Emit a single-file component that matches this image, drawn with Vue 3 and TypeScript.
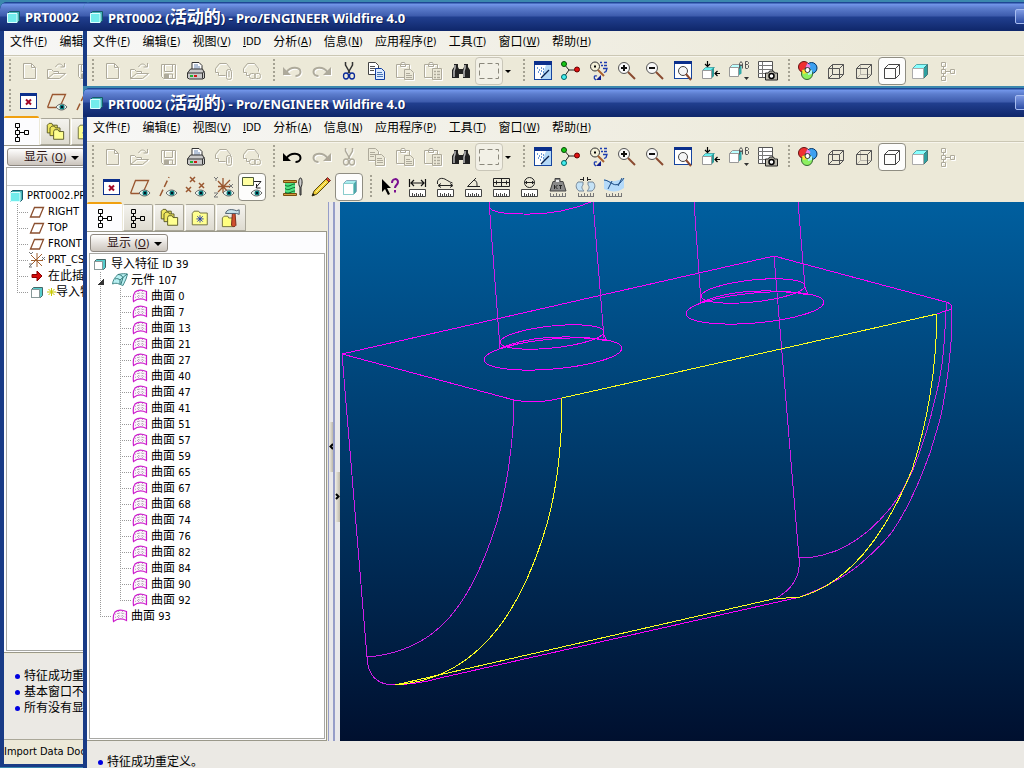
<script setup lang="ts">
import { h } from 'vue'

interface MenuItem { label: string; key: string }
interface Tool { icon: string; tip: string; off?: boolean; on?: boolean; soft?: boolean; drop?: boolean }
interface TreeRow { text: string; level: number; icon: string; last?: boolean; open?: boolean; star?: boolean }

/* Splits a label into Chinese and Latin runs so each gets its own type size. */
const Label = (props: { text: string }) =>
  h('span', { class: 'label' }, props.text.split(/([\u3000-\u9fff]+)/).filter(Boolean).map(run =>
    h('span', { class: /[\u3000-\u9fff]/.test(run) ? 'cn' : 'en' }, run)))
Label.props = ['text']

const fullTitle = ['PRT0002 (', '活动的', ') - Pro/ENGINEER Wildfire 4.0']

const menu: MenuItem[] = [
  { label: '文件', key: 'F' }, { label: '编辑', key: 'E' }, { label: '视图', key: 'V' },
  { label: '', key: 'IDD' }, { label: '分析', key: 'A' }, { label: '信息', key: 'N' },
  { label: '应用程序', key: 'P' }, { label: '工具', key: 'T' }, { label: '窗口', key: 'W' },
  { label: '帮助', key: 'H' },
]

const mainBar = (canUndo: boolean): Tool[][] => [
  [
    { icon: 'new', tip: '新建', off: true }, { icon: 'open', tip: '打开', off: true },
    { icon: 'save', tip: '保存', off: true }, { icon: 'print', tip: '打印' },
    { icon: 'mail', tip: '发送', off: true }, { icon: 'link', tip: '发送链接', off: true },
  ],
  [
    { icon: 'undo', tip: '撤消', off: !canUndo }, { icon: 'redo', tip: '重做', off: true },
    { icon: 'cut', tip: '剪切', off: canUndo }, { icon: 'copy', tip: '复制', off: canUndo },
    { icon: 'paste', tip: '粘贴', off: true }, { icon: 'pastex', tip: '选择性粘贴', off: true },
    { icon: 'find', tip: '查找' }, { icon: 'select', tip: '选取', soft: true, drop: true },
  ],
  [
    { icon: 'repaint', tip: '重画' }, { icon: 'spin', tip: '旋转中心' }, { icon: 'orient', tip: '定向模式' },
    { icon: 'zoomin', tip: '放大' }, { icon: 'zoomout', tip: '缩小' }, { icon: 'refit', tip: '重新调整' },
    { icon: 'reorient', tip: '重定向' }, { icon: 'views', tip: '已保存视图' }, { icon: 'layers', tip: '视图管理器' },
  ],
  [
    { icon: 'color', tip: '外观' }, { icon: 'wire', tip: '线框' }, { icon: 'hidden', tip: '隐藏线' },
    { icon: 'nohidden', tip: '消隐', on: true }, { icon: 'shade', tip: '着色' }, { icon: 'tree', tip: '模型树', off: true },
  ],
]

const featureBar: Tool[][] = [
  [
    { icon: 'close', tip: '关闭' }, { icon: 'plane', tip: '基准平面' }, { icon: 'axis', tip: '基准轴' },
    { icon: 'points', tip: '基准点' }, { icon: 'csys', tip: '坐标系' }, { icon: 'note', tip: '注释', on: true },
  ],
  [{ icon: 'spool', tip: '缝合' }, { icon: 'pencil', tip: '编辑' }, { icon: 'cube', tip: '实体', on: true }],
  [
    { icon: 'help', tip: '上下文帮助' }, { icon: 'distance', tip: '距离' }, { icon: 'length', tip: '长度' },
    { icon: 'angle', tip: '角度' }, { icon: 'area', tip: '面积' }, { icon: 'diameter', tip: '直径' },
    { icon: 'mass', tip: '质量' }, { icon: 'clearance', tip: '间隙' }, { icon: 'curve', tip: '曲率' },
  ],
]

const backBars: Tool[][][] = [[mainBar(false)[0].slice(0, 3)], [featureBar[0].slice(0, 3)]]

const windows = [
  { id: 'back', title: ['PRT0002', '', ''], menu: [menu[0], { label: '编辑', key: '' }], bars: backBars },
  { id: 'middle', title: fullTitle, menu, bars: [mainBar(false)] },
  { id: 'front', title: fullTitle, menu, bars: [mainBar(true), featureBar] },
]

const backTabs = ['tree', 'folders', 'favorite']
const frontTabs = ['tree', 'tree', 'folders', 'favorite', 'hammer']

const backTree: TreeRow[] = [
  { text: 'PRT0002.PR', level: 0, icon: 'part' },
  { text: 'RIGHT', level: 1, icon: 'datum' }, { text: 'TOP', level: 1, icon: 'datum' },
  { text: 'FRONT', level: 1, icon: 'datum' }, { text: 'PRT_CS', level: 1, icon: 'csysmini' },
  { text: '在此插', level: 1, icon: 'insert' },
  { text: '导入特', level: 1, icon: 'import', last: true, star: true },
]

const surfaces = [0, 7, 13, 21, 27, 40, 47, 41, 51, 57, 59, 65, 67, 68, 74, 76, 82, 84, 90, 92]
const frontTree: TreeRow[] = [
  { text: '导入特征 ID 39', level: 0, icon: 'import' },
  { text: '元件 107', level: 1, icon: 'quilt', open: true },
  ...surfaces.map((n, i) => ({ text: `曲面 ${n}`, level: 2, icon: 'surface', last: i === surfaces.length - 1 })),
  { text: '曲面 93', level: 1, icon: 'surface', last: true },
]

const messages: Record<string, string[]> = {
  back: ['特征成功重', '基本窗口不', '所有没有显'],
  front: ['特征成功重定义。'],
}
</script>

<template>
  <div class="desktop">
    <svg class="defs" width="0" height="0" aria-hidden="true">
      <symbol id="i-new" viewBox="0 0 22 22"><path d="M5.5 3.5h8l4 4v11h-12zM13.5 3.5v4h4" fill="none" stroke="currentColor" /></symbol>
      <symbol id="i-open" viewBox="0 0 22 22"><path d="M1.5 18.5v-9h4l2 2h5v2M1.5 18.5l6-5h12l-6 5zM9.5 7c2-4 6-4 8 0M18.5 3v4h-4" fill="none" stroke="currentColor" /></symbol>
      <symbol id="i-save" viewBox="0 0 22 22"><path d="M4.5 4.5h14v14h-12l-2-2zM7.5 4.5v7h8v-7M7.5 18v-4h8v4" fill="none" stroke="currentColor" /><path d="M8 14h4v4h-4z" fill="currentColor" /></symbol>
      <symbol id="i-print" viewBox="0 0 22 22"><path d="M7 10V2.5h7l3 3V10" fill="#fff" stroke="#333" /><path d="M9 5h4M9 7h6M9 9h6" stroke="#6a86b0" /><path d="M2.5 13l3-4h12l2 4v5l-2 1h-13l-2-1z" fill="#c9c9c9" stroke="#333" /><path d="M2.5 13h15v5.5M17.5 13l2-2" fill="none" stroke="#333" /><path d="M5 15h3v2H5z" fill="#20b030" /><path d="M9 15h3v2H9z" fill="#d01818" /></symbol>
      <symbol id="i-mail" viewBox="0 0 22 22"><path d="M5.5 15.5v-3h-3v-4l4-5h7l4 5v2M5.5 15.5h7" fill="none" stroke="currentColor" /><rect x="13.5" y="9.5" width="5" height="10" rx="2" fill="none" stroke="currentColor" /><path d="M16 11v6" stroke="currentColor" /></symbol>
      <symbol id="i-link" viewBox="0 0 22 22"><path d="M5.5 15.5v-3h-3v-4l4-5h7l4 5v3M5.5 15.5h3" fill="none" stroke="currentColor" /><rect x="8.5" y="13.5" width="6" height="5" rx="2" fill="none" stroke="currentColor" /><rect x="13.5" y="13.5" width="6" height="5" rx="2" fill="none" stroke="currentColor" /></symbol>
      <symbol id="i-undo" viewBox="0 0 22 22"><path d="M4.5 12c4-6 14-5.5 14 0 0 3-3 4-5 4" fill="none" stroke="currentColor" stroke-width="2" /><path d="M1 7v8h8z" fill="currentColor" /></symbol>
      <symbol id="i-redo" viewBox="0 0 22 22"><path d="M17.5 12c-4-6-14-5.5-14 0 0 3 3 4 5 4" fill="none" stroke="currentColor" stroke-width="2" /><path d="M21 7v8h-8z" fill="currentColor" /></symbol>
      <symbol id="i-cut" viewBox="0 0 22 22"><path d="M7.5 2v3l4.5 8M14.5 2v3l-4.5 8" fill="none" stroke="var(--tone, #333)" stroke-width="1.5" /><ellipse cx="8" cy="16" rx="2.5" ry="3" fill="none" stroke="var(--tone, #0a2a9a)" stroke-width="1.3" /><ellipse cx="14" cy="16" rx="2.5" ry="3" fill="none" stroke="var(--tone, #0a2a9a)" stroke-width="1.3" /></symbol>
      <symbol id="i-copy" viewBox="0 0 22 22"><path d="M2.5 2.5h7l3 3v9h-10z" fill="var(--paper, #fff)" stroke="var(--tone, #444)" /><path d="M4 6.5h5M4 8.5h6M4 10.5h4" stroke="var(--tone, #555)" /><path d="M9.5 8.5h6l3 3v8h-9z" fill="var(--paper, #dcebff)" stroke="var(--tone, #123ea0)" /><path d="M11 12.5h5M11 14.5h6M11 16.5h6" stroke="var(--tone, #4a76b8)" /></symbol>
      <symbol id="i-paste" viewBox="0 0 22 22"><path d="M2.5 4.5h13v13h-13zM6.5 4.5l1-2h3l1 2v2h-5z" fill="none" stroke="currentColor" /><path d="M10.5 9.5h6l3 3v7h-9z" fill="#ece9d8" stroke="currentColor" /><path d="M12 13.5h4M12 15.5h6M12 17.5h6" stroke="currentColor" /></symbol>
      <symbol id="i-pastex" viewBox="0 0 22 22"><path d="M2.5 4.5h13v13h-13zM6.5 4.5l1-2h3l1 2v2h-5z" fill="none" stroke="currentColor" /><path d="M10.5 8.5h9v11h-9z" fill="#ece9d8" stroke="currentColor" /><path d="M12 11.5h2M12 14.5h2M12 17.5h2M15 11.5h3M15 14.5h3M15 17.5h3" stroke="currentColor" stroke-width="1.5" /></symbol>
      <symbol id="i-find" viewBox="0 0 22 22"><path d="M4 4h4v3l1 2v9H2v-8l2-3zM14 4h4v3l2 3v8h-7V9l1-2zM9 9h4v5H9z" fill="#222" /><path d="M5 5v3l-1 3v6M15 5v3l-1 3v6" fill="none" stroke="#b8b8b8" stroke-width="1.5" /></symbol>
      <symbol id="i-select" viewBox="0 0 22 22"><rect x="1.5" y="3.5" width="19" height="15" fill="none" stroke="#8b887c" stroke-dasharray="5 3" /></symbol>
      <symbol id="i-repaint" viewBox="0 0 22 22"><rect x="2.5" y="2.5" width="17" height="17" fill="#fff" stroke="#1645a0" /><path d="M14 5h5v14H9z" fill="#b4d8f6" /><path d="M2 1h18v4H2z" fill="#0b2f8c" /><path d="M5 8h1M7 10h1M9 8h1M6 12h1M9 11h1M11 9h1M8 14h1M11 12h1M12 14h1" stroke="#3c78c8" stroke-width="1.5" /><path d="M9 18l8-8" stroke="#071e4a" stroke-width="1.3" /></symbol>
      <symbol id="i-spin" viewBox="0 0 22 22"><path d="M4 4l5 6h9M9 10l-5 7" fill="none" stroke="#222" /><circle cx="4" cy="4" r="2.5" fill="#17c817" stroke="#064806" /><circle cx="4" cy="17" r="2.5" fill="#4ee" stroke="#066" /><circle cx="17" cy="9.5" r="2.5" fill="#e01010" stroke="#600" /></symbol>
      <symbol id="i-orient" viewBox="0 0 22 22"><circle cx="7" cy="6.5" r="4.5" fill="#f3f0d8" stroke="#333" /><path d="M6 6.5h2" stroke="#000" stroke-width="2" /><path d="M10 10l6 6" stroke="#a86030" stroke-width="2" /><path d="M12 2.5h2M16 2.5h3M13 5.5h2M16 5.5h3M15 8.5h4l-1 3-2 1M9 16c-3-1-4 2-1 4" fill="none" stroke="#1c3cae" stroke-width="1.3" /><path d="M8 20h5v-5z" fill="#101c8c" /></symbol>
      <symbol id="i-zoomin" viewBox="0 0 22 22"><circle cx="8" cy="8" r="5.5" fill="#f8f8f8" stroke="#555" /><path d="M5 8h6M8 5v6" stroke="#111" stroke-width="2" /><path d="M12 12l7 7" stroke="#8a4a30" stroke-width="2" /></symbol>
      <symbol id="i-zoomout" viewBox="0 0 22 22"><circle cx="8" cy="8" r="5.5" fill="#f8f8f8" stroke="#555" /><path d="M5 8h6" stroke="#111" stroke-width="2" /><path d="M12 12l7 7" stroke="#8a4a30" stroke-width="2" /></symbol>
      <symbol id="i-refit" viewBox="0 0 22 22"><rect x="2.5" y="2.5" width="17" height="16" fill="#fff" stroke="#1645a0" /><path d="M2 1h18v3H2z" fill="#0b2f8c" /><circle cx="11" cy="11" r="4.5" fill="#f5f5f5" stroke="#444" /><path d="M14 14l5 6" stroke="#8a4a30" stroke-width="2" /></symbol>
      <symbol id="i-reorient" viewBox="0 0 22 22"><path d="M2.5 10.5l3-3h9l-3 3z" fill="#6ee" stroke="#5aa" /><path d="M11 10l3-3v9l-3 3z" fill="#2a9a98" /><path d="M2.5 10.5h9v8h-9z" fill="#fff" stroke="#999" /><path d="M7.5 1v5M5 4l2.5 2.5L10 4M20 13.5h-5M17.5 11l-2.5 2.5 2.5 2.5" fill="none" stroke="#000" stroke-width="1.2" /></symbol>
      <symbol id="i-views" viewBox="0 0 22 22"><path d="M1.5 7.5l3-3h9l-3 3z" fill="#bff" stroke="#999" /><path d="M10.5 7.5l3-3v9l-3 2z" fill="#3aa" /><path d="M1.5 7.5h9v9h-9z" fill="#fff" stroke="#999" /><path d="M11.5 8.5V3.5l1.5-2 1.5 2v5M12 5.5h2M17.5 8V1.5h2l1 1v1l-1 1h-2M19.5 4.5l1 1v2l-1 1h-2" fill="none" stroke="#555" /><path d="M16 17h5l-2.500 3z" fill="#333" /></symbol>
      <symbol id="i-layers" viewBox="0 0 22 22"><path d="M2.5 1.5h14v16h-14z" fill="#fff" stroke="#555" /><path d="M2 5.5h14M2 9.5h14M2 13.5h14M6.5 2v15" stroke="#777" /><path d="M9.5 13h3l1-2h4l1 2h3v7h-12z" fill="#bbb8ac" stroke="#222" /><circle cx="15.5" cy="16" r="2.5" fill="#fff" stroke="#000" stroke-width="1.5" /></symbol>
      <symbol id="i-color" viewBox="0 0 22 22"><circle cx="7" cy="7" r="5.5" fill="#f03030" stroke="#611" /><circle cx="14.5" cy="8" r="5.5" fill="#3ca0f0" stroke="#036" /><circle cx="10" cy="14" r="5.5" fill="#8df060" stroke="#363" /><path d="M10.5 3l3 3-2 4-3-3z" fill="#f080e0" /><path d="M5 10l5-1v4l-4 1z" fill="#ffe030" /><path d="M15 10v4l-4 1v-4z" fill="#aef4f8" /><circle cx="10.5" cy="10" r="2.5" fill="#fff" stroke="#333" /></symbol>
      <symbol id="i-wire" viewBox="0 0 22 22"><path d="M3.5 8.5h11v10h-11zM7.5 4.5h11v10h-11zM3.5 8.5l4-4M14.5 8.5l4-4M14.5 18.5l4-4M3.5 18.5l4-4" fill="none" stroke="#555" /></symbol>
      <symbol id="i-hidden" viewBox="0 0 22 22"><path d="M7.5 4.5v10h11M3.5 18.5l4-4" fill="none" stroke="#b5b2a8" /><path d="M3.5 8.5h11v10h-11zM3.5 8.5l4-4h11v10l-4 4M14.5 8.5l4-4" fill="none" stroke="#555" /></symbol>
      <symbol id="i-nohidden" viewBox="0 0 22 22"><path d="M3.5 8.5h11v10h-11zM3.5 8.5l4-4h11v10l-4 4M14.5 8.5l4-4" fill="none" stroke="#444" /></symbol>
      <symbol id="i-shade" viewBox="0 0 22 22"><path d="M3.5 8.5l4-4h11l-4 4z" fill="#8ff" stroke="#5aa" /><path d="M14.5 8.5l4-4v10l-4 4z" fill="#2f9f9f" stroke="#477" /><path d="M3.5 8.5h11v10h-11z" fill="#fff" stroke="#aaa" /></symbol>
      <symbol id="i-tree" viewBox="0 0 22 22"><path d="M4.5 2.5h4v4h-4zM4.5 9.5h4v4h-4zM4.5 16.5h4v4h-4zM13.5 9.5h4v4h-4zM6.5 6.5v3M6.5 13.5v3M8.5 11.5h5" fill="none" stroke="currentColor" /></symbol>
      <symbol id="i-close" viewBox="0 0 22 22"><rect x="2.5" y="4.5" width="16" height="14" fill="#fff" stroke="#0b2f8c" /><path d="M2 3h17v3H2z" fill="#0b2f8c" /><path d="M8 9.500l5 5M13 9.500l-5 5" stroke="#a00828" stroke-width="2" /></symbol>
      <symbol id="i-eye" viewBox="0 0 12 8"><path d="M0 4c3-4 8-4 11 0-3 4-8 4-11 0z" fill="#e8f4f0" stroke="#666" /><circle cx="6" cy="4" r="2.5" fill="#087878" /><path d="M5 4h2" stroke="#012" stroke-width="2" /></symbol>
      <symbol id="i-plane" viewBox="0 0 22 22"><path d="M1.5 17.5l5-13h13l-5 11M1.5 17.5h9" fill="none" stroke="#9a5730" stroke-width="1.3" /><use href="#i-eye" x="10" y="13" width="12" height="8" /></symbol>
      <symbol id="i-axis" viewBox="0 0 22 22"><path d="M3 20L12 1" stroke="#9a5730" stroke-width="1.5" stroke-dasharray="7 3" /><use href="#i-eye" x="9" y="13" width="12" height="8" /></symbol>
      <symbol id="i-points" viewBox="0 0 22 22"><path d="M5 1l5 5M10 1L5 6M14 7l5 5M19 7l-5 5M1 11l5 5M6 11l-5 5" stroke="#9a5730" stroke-width="1.5" /><use href="#i-eye" x="10" y="13" width="12" height="8" /></symbol>
      <symbol id="i-csys" viewBox="0 0 22 22"><path d="M10 2v15M5 5l11 12M17 4L5 16M5 10.5h12" stroke="#9a5730" stroke-width="1.3" /><path d="M1 1l2 2 2-2M3 3v2M1 17h4l-4 4h4M16 8l4 4M20 8l-4 4" fill="none" stroke="#777" /><use href="#i-eye" x="10" y="13" width="12" height="8" /></symbol>
      <symbol id="i-note" viewBox="0 0 22 22"><path d="M1.5 1.5h11v8h-11z" fill="#ffffa0" stroke="#4a5a3a" /><path d="M13 5.500h7l-5 6M15.500 8v4h4" fill="none" stroke="#222" /><use href="#i-eye" x="10" y="13" width="12" height="8" /></symbol>
      <symbol id="i-spool" viewBox="0 0 22 22"><path d="M1.5 4.5h13v2h-13zM1.5 17.5h13v2h-13z" fill="#d0a040" stroke="#7a4a10" /><path d="M3 7h10v10H3z" fill="#4fe080" /><path d="M3 9c4 3 6-1 10-1M3 12.500c4 3 6-1 10-1M3 16c4 3 6-1 10-1" stroke="#08672c" fill="none" /><path d="M18.500 2c2 0 2 7 .500 9v8h-1v-8c-2-2-1.500-9 .500-9z" fill="#ccc" stroke="#222" /></symbol>
      <symbol id="i-pencil" viewBox="0 0 22 22"><path d="M2 20l2-5L16 3l3 3L7 18z" fill="#f0d038" stroke="#5a4a10" /><path d="M16 3l1.500-1.500 3 3L19 6z" fill="#e04030" stroke="#703020" /><path d="M2 20l1-3 2 2z" fill="#111" /><path d="M6 16L16 6" stroke="#fff4a0" /></symbol>
      <symbol id="i-cube" viewBox="0 0 22 22"><path d="M5.5 7.5l3-3h10v11l-3 3h-10z" fill="#a8ecee" stroke="#8ab" /><path d="M15.500 8l2.500-3v11l-2.500 2.500z" fill="#4aa8a8" /><path d="M5.5 7.5h10v11h-10z" fill="#fff" stroke="#8cc" /></symbol>
      <symbol id="i-help" viewBox="0 0 22 22"><path d="M3 3v13l3-3 3 6 2-1-3-6h4z" fill="#000" /><path d="M13 7c0-5 6-5 6-1 0 3-3 3-3 6M16 14v2.500" fill="none" stroke="#7a1090" stroke-width="2" /></symbol>
      <symbol id="i-ruler" viewBox="0 0 18 8"><path d="M.5 .5h16v7H.5z" fill="#fff" stroke="#444" /><path d="M3.5 7V4M5.5 7V5M7.5 7V4M9.5 7V5M11.5 7V4M13.5 7V5" stroke="#444" /></symbol>
      <symbol id="i-distance" viewBox="0 0 22 22"><path d="M2.5 3v8M18.5 3v8M4 7h13M7 4L4 7l3 3M14 4l3 3-3 3" fill="none" stroke="#111" stroke-width="1.2" /><use href="#i-ruler" x="2" y="13" width="18" height="8" /></symbol>
      <symbol id="i-length" viewBox="0 0 22 22"><path d="M2.5 8c-1-6 5-7 9-4 2 1 3 2 6 3M4 9.5h13M6 7.5l-3 2 3 2M15 7.5l3 2-3 2" fill="none" stroke="#222" /><use href="#i-ruler" x="2" y="13" width="18" height="8" /></symbol>
      <symbol id="i-angle" viewBox="0 0 22 22"><path d="M13 2L4.5 10.5H17M11 4c3 1 3 3 3 6" fill="none" stroke="#222" /><use href="#i-ruler" x="2" y="13" width="18" height="8" /></symbol>
      <symbol id="i-area" viewBox="0 0 22 22"><path d="M2.5 2.5h16v8h-16zM3 6.5h15M10.5 2v9M5.5 4.5v4M15.5 4.5v4" fill="none" stroke="#222" /><use href="#i-ruler" x="2" y="13" width="18" height="8" /></symbol>
      <symbol id="i-diameter" viewBox="0 0 22 22"><circle cx="10.5" cy="6.5" r="5" fill="none" stroke="#222" /><path d="M5.5 6.5h10M7.5 5v3M13.5 5v3" stroke="#222" /><use href="#i-ruler" x="2" y="13" width="18" height="8" /></symbol>
      <symbol id="i-mass" viewBox="0 0 22 22"><path d="M8 2.5h5v3h3l3 9.500H3l3-9.500h2z" fill="#8a8a8a" stroke="#444" /><path d="M9 4h3v2H9z" fill="#eee" /><path d="M7.5 9v4M10.5 9l-2 2 2 2M13.5 9v4M12 9.5h3" fill="none" stroke="#222" /><path d="M3 20.5h16M3.5 20v-3M6.5 20v-2M9.5 20v-3M12.5 20v-2M15.5 20v-3M18.5 20v-3" stroke="#777" /></symbol>
      <symbol id="i-clearance" viewBox="0 0 22 22"><path d="M3 6h5v3c-2 2-1 4 1 6H4c-3-2-4-6-1-9zM18 6h-5v3c2 2 1 4-1 6h5c3-2 4-6 1-9z" fill="#c4e2f6" stroke="#789" /><path d="M8.5 1v4M12.5 1v4M5 3.5h3M13 3.5h3" stroke="#222" /><path d="M3 20.5h16M3.5 20v-3M6.5 20v-2M9.5 20v-3M12.5 20v-2M15.5 20v-3M18.5 20v-3" stroke="#777" /></symbol>
      <symbol id="i-curve" viewBox="0 0 22 22"><path d="M1 3c6 3 12 3 20-1v10c-7 5-13 4-20 1z" fill="#b4dafa" /><path d="M1 4c3 0 5 2 9 4s7 0 11-6M5 13l4-8M15 10l4-8" fill="none" stroke="#184880" /><path d="M3 20.5h16M3.5 20v-3M6.5 20v-2M9.5 20v-3M12.5 20v-2M15.5 20v-3M18.5 20v-3" stroke="#777" /></symbol>
      <symbol id="i-folders" viewBox="0 0 22 22"><g fill="#f0e860" stroke="#555522"><path d="M2.5 12V3.5l2-2h3l1 2h5V12z" /><path d="M5.5 15V6.5l2-2h3l1 2h5V15z" /><path d="M9.5 19v-8.500l1-2h4l1 2h5V19z" fill="#ffff90" /></g></symbol>
      <symbol id="i-favorite" viewBox="0 0 22 22"><path d="M2.5 18.5V6l2-2.500h5l1.500 2h8v13z" fill="#ffff90" stroke="#686838" /><path d="M11 8v8M7 12h8M8 9l6 6M14 9l-6 6" stroke="#2038b0" /></symbol>
      <symbol id="i-hammer" viewBox="0 0 22 22"><path d="M1.5 20.5V11l2-2h4l1 2h5v9.500z" fill="#ffff80" stroke="#686838" /><path d="M12.5 6h3l1 13c-1 2-4 2-5 0z" fill="#d05030" stroke="#702818" /><path d="M5 6c1-5 7-5 12-3l3-1v5l-3-1H9z" fill="#c8e4ec" stroke="#456" /></symbol>
      <symbol id="i-part" viewBox="0 0 16 16"><path d="M2.5 4.5l2-2h10v9l-2 2h-10z" fill="#45b4b8" stroke="#165a68" /><path d="M2.5 4.5h9.500v9h-9.500z" fill="#72ecec" stroke="#dff" /></symbol>
      <symbol id="i-import" viewBox="0 0 16 16"><path d="M2.5 5.5l2-2h9v8l-2 2h-9z" fill="#5cc" stroke="#466" /><path d="M2.5 5.5h8v8h-8z" fill="#fff" stroke="#899" /></symbol>
      <symbol id="i-datum" viewBox="0 0 16 16"><path d="M1.5 13l4-9.500h9L10.500 13z" fill="none" stroke="#8b5030" stroke-width="1.3" /></symbol>
      <symbol id="i-csysmini" viewBox="0 0 16 16"><path d="M8 1v14M2 3l11 11M13 2L2 13M2 8.500h12" stroke="#a06030" /><path d="M0 0l2 2 2-2M0 12h3l-3 3h3M13 5l3 3M16 5l-3 3" fill="none" stroke="#777" /></symbol>
      <symbol id="i-insert" viewBox="0 0 16 16"><path d="M3 6.5h5V3l5 5-5 5V9.500H3z" fill="#d40c0c" stroke="#800" /></symbol>
      <symbol id="i-quilt" viewBox="0 0 16 16"><path d="M.5 12C1 8 3 5 6 2.500c4-1 7-1 9.500-.500L14 7l-3 6.500-4-1.500c-2-1-4-1-6.500 0z" fill="#b8f0f2" stroke="#488" /><path d="M3 7c2-1 4 0 5 1l7-6M8 8v4M6 2.500c2 0 4 1 5 3L9 12" fill="none" stroke="#377" /></symbol>
      <symbol id="i-surface" viewBox="0 0 16 16"><path d="M1.5 13.500C1 10 1.500 6 3 4c3-2.500 7-2.500 11.500-.500v9c-4-2-9-2-13 1z" fill="#fdf4fd" stroke="#cc1ccc" stroke-width="1.2" /><path d="M3 6.500c4-2 8-2 11 0M3 9.500c4-2 8-2 11 0M6.500 3v8M10.500 3v8" fill="none" stroke="#b8a8b8" stroke-dasharray="1 1" /></symbol>
    </svg>

    <section v-for="win in windows" :key="win.id" class="window" :class="win.id">
      <header class="titlebar">
        <svg class="mini" aria-hidden="true"><use href="#i-part" /></svg>
        <h1>{{ win.title[0] }}<span v-if="win.title[1]" class="kai">{{ win.title[1] }}</span>{{ win.title[2] }}</h1>
        <div class="controls">
          <button aria-label="最小化"></button><button aria-label="最大化"></button><button aria-label="关闭"></button>
        </div>
      </header>

      <div class="client">
        <nav class="menubar">
          <button v-for="m in win.menu" :key="m.label">
            <template v-if="m.label"><Label :text="m.label" /><span v-if="m.key">(<u>{{ m.key }}</u>)</span></template>
            <template v-else><u>I</u>DD</template>
          </button>
        </nav>

        <div v-for="(bar, b) in win.bars" :key="b" class="toolbar" role="toolbar">
          <div v-for="(group, g) in bar" :key="g" class="group">
            <i class="grip"></i>
            <template v-for="t in group" :key="t.icon">
              <button class="tool" :class="{ off: t.off, on: t.on, soft: t.soft }" :aria-label="t.tip" :disabled="t.off">
                <svg aria-hidden="true"><use :href="'#i-' + t.icon" /></svg>
              </button>
              <button v-if="t.drop" class="drop" aria-label="选取过滤器"><i class="caret"></i></button>
            </template>
          </div>
        </div>

        <div v-if="win.id !== 'middle'" class="work">
          <aside class="navigator">
            <div class="tabs" role="tablist">
              <button v-for="(tab, i) in win.id === 'back' ? backTabs : frontTabs" :key="i" role="tab"
                class="tab" :class="[tab, { current: i === 0 }]" :aria-selected="i === 0" :aria-label="'导航器 ' + (i + 1)">
                <svg aria-hidden="true"><use :href="'#i-' + tab" /></svg>
              </button>
            </div>
            <div class="panel">
              <button class="show"><Label text="显示" /> (<u>O</u>)<i class="caret"></i></button>
              <div class="treebox">
                <div v-if="win.id === 'back'" class="treehead"></div>
                <ul role="tree">
                  <li v-for="(row, r) in win.id === 'back' ? backTree : frontTree" :key="r" role="treeitem" :class="'level' + row.level">
                    <svg v-if="row.level === 2" class="guide stem" aria-hidden="true"><path d="M.5 0V16" /></svg>
                    <svg v-if="row.level > 0" class="guide" aria-hidden="true">
                      <path :d="row.last ? 'M.5 0V9' : 'M.5 0V16'" /><path v-if="!row.open" d="M0 8.5H12" />
                      <path v-if="row.open" class="twisty" d="M4 6v7h-6z" />
                    </svg>
                    <svg class="mini" aria-hidden="true"><use :href="'#i-' + row.icon" /></svg>
                    <svg v-if="row.star" class="star" aria-hidden="true"><path d="M4.5 1v8M0 5h9M1.5 2l6 6M7.5 2l-6 6" /></svg>
                    <Label :text="row.text" />
                  </li>
                </ul>
              </div>
            </div>
          </aside>

          <template v-if="win.id === 'front'">
            <div class="splitter near"><button aria-label="折叠导航器"><svg aria-hidden="true"><path d="M4 1L1.5 3.5 4 6" /></svg></button></div>
            <div class="splitter far"><button aria-label="展开浏览器"><svg aria-hidden="true"><path d="M1 1l2.5 2.5L1 6" /></svg></button></div>
            <svg class="canvas" role="img" aria-label="零件线框视图">
              <g transform="translate(-340 -202)" fill="none" stroke="#ff00ff" shape-rendering="crispEdges">
                <path d="M562 398Q545 402 530 402Q520 401 514 400L342 354L774 256L946 302Q952 304 952 307Q952 310 945 311L937 314" />
                <g stroke="#cf1ee6">
                  <path d="M342 354L367 657Q368 684 393 685" />
                  <path d="M774 256L799 558Q802 584 775 599" />
                  <path d="M514 400C514 440 506 500 491 540C466 611 432 652 367 657" />
                  <path d="M946 302V311C944 353 942 375 934 403C930 422 926 437 913 470C905 487 900 495 892 506C865 540 835 558 799 558" />
                  <path d="M952 309C952 330 951 345 950 353Q948 375 945 393Q942 415 936 433Q931 452 924 469Q917 487 909 503Q901 519 892 532Q881 546 868 557Q845 580 800 597" />
                  <path d="M489 202L500 348M593 202L604 338M694 202L701 302M798 202L805 287" />
                </g>
                <path d="M393 685Q420 684 440 678L800 597" />
                <path d="M489 207Q492 214 523 214Q560 215 591 202" />
                <ellipse cx="552" cy="337" rx="52" ry="11" transform="rotate(-6 552 337)" />
                <ellipse cx="553" cy="354" rx="69" ry="15" transform="rotate(-5 553 354)" />
                <ellipse cx="753" cy="291" rx="52" ry="11" transform="rotate(-6 753 291)" />
                <ellipse cx="755" cy="308" rx="69" ry="15" transform="rotate(-5 755 308)" />
                <path d="M497 350Q525 336 570 337Q592 337 607 341M604 335l3 6M698 304Q726 290 771 291Q793 291 808 295M805 287l3 8" />
                <g stroke="#ffff20">
                  <path d="M395 685L773 599L800 597C850 583 885 535 912 470C925 430 936 380 937 314L562 398C562 440 559 490 542 540C512 631 465 680 395 685" />
                </g>
              </g>
            </svg>
          </template>
        </div>

        <ul v-if="messages[win.id]" class="messages">
          <li v-for="m in messages[win.id]" :key="m"><i class="dot"></i><Label :text="m" /></li>
        </ul>
        <footer v-if="win.id === 'back'" class="status">Import Data Doc</footer>
      </div>
    </section>
  </div>
</template>

<style>
body { margin: 0; overflow: hidden; }
.label { white-space: pre; }
.label .cn { font-size: 12px; }
</style>

<style scoped>
.desktop {
  position: relative;
  height: 100vh;
  overflow: hidden;
  background: #3b88ae;
  color: #000;
  font: 11px/16px "DejaVu Sans Condensed", "Noto Sans CJK SC", sans-serif;
}
.defs { position: absolute; }
button { font: inherit; color: inherit; padding: 0; border: 0; background: none; white-space: nowrap; flex: none; }
ul { margin: 0; padding: 0; list-style: none; }
svg { flex: none; }

.window {
  position: absolute;
  display: flex;
  flex-direction: column;
  box-sizing: border-box;
  overflow: hidden;
  border-radius: 7px 7px 0 0;
  background: #193b86;
}
.back { left: 0; top: 2px; right: 200px; bottom: 1px; padding-bottom: 3px; }
.middle { left: 83px; top: 2px; right: -63px; height: 94px; background: #3b88ae; padding-bottom: 10px; }
.front { left: 83px; top: 88px; right: -63px; bottom: 0; }

.titlebar {
  display: flex;
  align-items: center;
  gap: 4px;
  height: 29px;
  flex: none;
  box-sizing: border-box;
  padding: 0 5px 0 6px;
  background: linear-gradient(#1f4695 0, #1f4695 1px, #7397ea 2px, #5c7dcd 6px, #3d5bac 14px, #213f8f 15px, #10286c 28px);
  border-radius: 7px 7px 0 0;
}
.titlebar h1 {
  margin: 0;
  color: #fff;
  font: bold 13px/20px "Noto Sans", "Noto Sans CJK SC", sans-serif;
  text-shadow: 1px 1px #0c1f58;
  white-space: pre;
}
.titlebar .kai { font-family: "Noto Sans CJK SC", sans-serif; font-size: 17px; font-weight: bold; }
.titlebar .mini { margin-left: -1px; }
.controls { display: flex; gap: 2px; margin-left: auto; }
.controls button { width: 21px; height: 15px; border: 1px solid #a8bdf0; border-radius: 2px; background: linear-gradient(#7f9be4, #2d4da4); }

.client { display: flex; flex-direction: column; flex: 1; min-height: 0; margin-left: 4px; background: #ece9d8; }
.middle .client { margin-left: 0; border-left: 4px solid #193b86; }
.menubar {
  display: flex;
  gap: 12px;
  height: 24px;
  flex: none;
  padding: 0 6px;
  background: linear-gradient(90deg, #f7f7f6, #ece9d8 80%);
  border-bottom: 1px solid #cbc7b4;
}
.menubar button { display: flex; align-items: center; height: 22px; }

.toolbar { display: flex; height: 30px; flex: none; box-shadow: inset 0 1px #f7f5ec; }
.toolbar + .toolbar { box-shadow: none; }
.group { display: flex; align-items: center; }
.grip { width: 2px; height: 24px; margin: 0 4px 0 7px; background: repeating-linear-gradient(#a5a293 0 2px, transparent 2px 4px); }
.group:first-child .grip { margin-left: 5px; }
.tool {
  display: flex;
  align-items: center;
  justify-content: center;
  width: 28px;
  height: 28px;
  box-sizing: border-box;
  border: 1px solid transparent;
  border-radius: 4px;
  color: #000;
}
.tool svg { width: 22px; height: 22px; }
.tool.on { background: #fdfdfc; border-color: #8f8d82; }
.tool.soft { background: #f2f0e6; border-color: #c9c6b8; }
.tool.off { color: #aeaa9b; --tone: #aeaa9b; --paper: #ece9d8; }
.tool.off svg { filter: drop-shadow(1px 1px 0 #fff); }
.drop { display: flex; align-items: center; width: 13px; height: 24px; padding-left: 2px; box-sizing: border-box; }
.caret { display: inline-block; width: 0; height: 0; border: 3px solid transparent; border-top-color: #000; border-bottom: 0; vertical-align: middle; }

.work { display: flex; flex: 1; min-height: 0; }
.navigator { display: flex; flex-direction: column; flex: none; width: 240px; }
.tabs { display: flex; height: 29px; flex: none; align-items: flex-end; gap: 1px; }
.tab {
  display: flex;
  align-items: center;
  justify-content: center;
  width: 30px;
  height: 27px;
  box-sizing: border-box;
  border: 1px solid #a9a698;
  border-left-color: #fff;
  border-radius: 2px 2px 0 0;
  background: linear-gradient(#f4f3ee, #dedbd0);
}
.tab svg { width: 20px; height: 20px; }
.tab.tree svg { width: 22px; height: 22px; }
.tab.current { width: 35px; height: 29px; border: 0; border-top: 2px solid #f0a010; background: #fcfcfe; }
.panel {
  display: flex;
  flex-direction: column;
  align-items: flex-start;
  flex: 1;
  min-height: 0;
  box-sizing: border-box;
  padding: 2px 1px 1px 2px;
  border: 1px solid #9a988a;
  border-left: 0;
  background: #fcfcfe;
}
.show {
  height: 18px;
  width: 78px;
  margin: 0 0 1px 1px;
  padding-left: 16px;
  box-sizing: border-box;
  border: 1px solid #8d8780;
  border-radius: 3px;
  background: linear-gradient(#fff, #e5e1dd 50%, #cbc5bd);
  line-height: 16px;
  text-align: left;
  color: #2a1010;
}
.show .caret { margin-left: 4px; border-width: 4px; border-bottom: 0; }
.treebox { flex: 1; align-self: stretch; min-height: 0; border: 1px solid #a8a8a4; background: #fff; }
.front .treebox ul { padding-top: 2px; }
.treehead { height: 17px; border-bottom: 1px solid #ccc; }
.back .treebox ul { padding-top: 2px; }
li { display: flex; align-items: center; height: 16px; white-space: nowrap; }
.mini { width: 16px; height: 16px; }
.treebox .label { margin-left: 3px; }
.level0 { padding-left: 2px; }
.level1, .level2 { padding-left: 10px; }
.back .level0 { padding-left: 1px; }
.guide { width: 12px; height: 16px; fill: none; stroke: #999; stroke-dasharray: 1 1; overflow: visible; shape-rendering: crispEdges; }
.guide.stem { width: 20px; }
.guide .twisty { fill: #333; stroke: none; }
.star { margin-left: 2px; width: 9px; height: 10px; fill: none; stroke: #c8c800; }
.treebox .star + .label { margin-left: 0; }

.splitter { display: flex; flex-direction: column; justify-content: center; flex: none; box-sizing: border-box; border-left: 1px solid #969dc8; background: #e9e8ea; }
.near { margin-left: 1px; width: 5px; }
.far { width: 7px; border-left-width: 2px; }
.splitter button { height: 50px; background: linear-gradient(90deg, #f2f0e8, #bdb8aa); }
.near button { margin-bottom: 50px; }
.far button { margin-top: 50px; }
.splitter svg { display: block; width: 5px; height: 7px; fill: none; stroke: #000; stroke-width: 2; }
.canvas { display: block; flex: 1; width: 0; height: 100%; background: linear-gradient(#005f9f, #00102f); }

.messages { flex: none; height: 27px; box-sizing: border-box; padding: 13px 0 0 11px; background: #ebe9e4; }
.back .messages { height: 86px; margin-top: 1px; padding-top: 14px; border-bottom: 1px solid #aaa798; }
.dot { width: 5px; height: 5px; margin-right: 4px; border-radius: 50%; background: #0000e0; }
.status { flex: none; height: 24px; line-height: 24px; white-space: nowrap; }
</style>
